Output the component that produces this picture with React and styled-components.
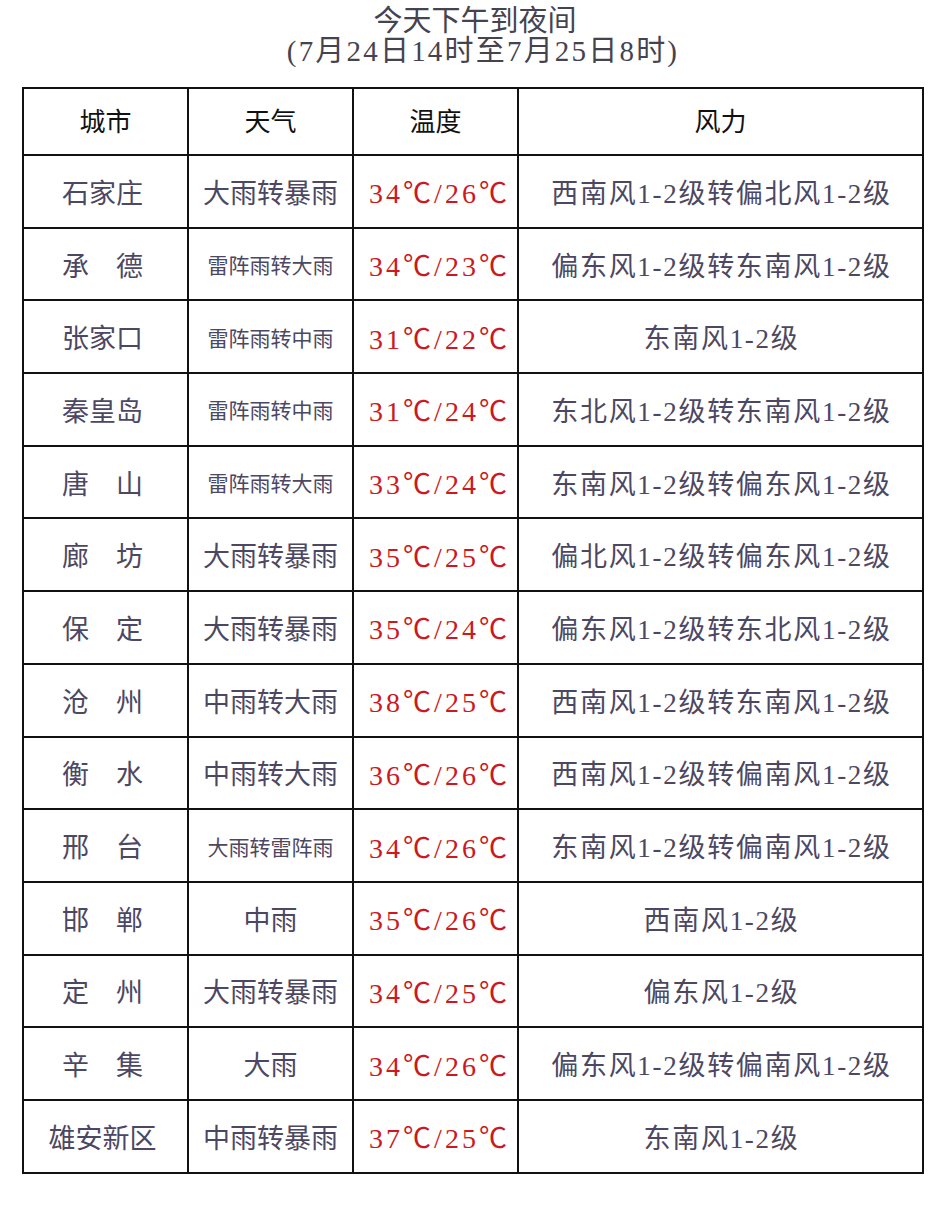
import React from "react";
import styled, { createGlobalStyle } from "styled-components";

const rows = [
  ["石家庄", "大雨转暴雨", false, "34℃/26℃", "西南风1-2级转偏北风1-2级"],
  ["承　德", "雷阵雨转大雨", true, "34℃/23℃", "偏东风1-2级转东南风1-2级"],
  ["张家口", "雷阵雨转中雨", true, "31℃/22℃", "东南风1-2级"],
  ["秦皇岛", "雷阵雨转中雨", true, "31℃/24℃", "东北风1-2级转东南风1-2级"],
  ["唐　山", "雷阵雨转大雨", true, "33℃/24℃", "东南风1-2级转偏东风1-2级"],
  ["廊　坊", "大雨转暴雨", false, "35℃/25℃", "偏北风1-2级转偏东风1-2级"],
  ["保　定", "大雨转暴雨", false, "35℃/24℃", "偏东风1-2级转东北风1-2级"],
  ["沧　州", "中雨转大雨", false, "38℃/25℃", "西南风1-2级转东南风1-2级"],
  ["衡　水", "中雨转大雨", false, "36℃/26℃", "西南风1-2级转偏南风1-2级"],
  ["邢　台", "大雨转雷阵雨", true, "34℃/26℃", "东南风1-2级转偏南风1-2级"],
  ["邯　郸", "中雨", false, "35℃/26℃", "西南风1-2级"],
  ["定　州", "大雨转暴雨", false, "34℃/25℃", "偏东风1-2级"],
  ["辛　集", "大雨", false, "34℃/26℃", "偏东风1-2级转偏南风1-2级"],
  ["雄安新区", "中雨转暴雨", false, "37℃/25℃", "东南风1-2级"],
];

export default function App() {
  return (
    <Page>
      <GlobalStyle />
      <Title>
        <TitleLine>今天下午到夜间</TitleLine>
        <TitleLine $spaced>(7月24日14时至7月25日8时)</TitleLine>
      </Title>
      <Grid>
        <HeadCell>城市</HeadCell>
        <HeadCell>天气</HeadCell>
        <HeadCell>温度</HeadCell>
        <HeadCell>风力</HeadCell>
        {rows.map(([city, weather, small, temp, wind], i) => (
          <React.Fragment key={i}>
            <Cell $shift>{city}</Cell>
            <Cell $small={small}>{weather}</Cell>
            <TempCell>{temp}</TempCell>
            <WindCell>{wind}</WindCell>
          </React.Fragment>
        ))}
      </Grid>
    </Page>
  );
}

const GlobalStyle = createGlobalStyle`
  body {
    margin: 0;
    background: #ffffff;
    font-family: "Liberation Serif", "Noto Sans CJK SC", serif;
  }
`;

const Page = styled.div`
  width: 942px;
  height: 1218px;
  padding: 0 20px 0 22px;
  box-sizing: border-box;
`;

const Title = styled.div`
  height: 87px;
  padding-top: 6px;
  box-sizing: border-box;
  text-align: center;
  color: #45434f;
  padding-left: 6px;
`;

const TitleLine = styled.div`
  font-size: 29px;
  line-height: 30px;
  letter-spacing: ${({ $spaced }) => ($spaced ? "2.2px" : "0")};
  padding-left: ${({ $spaced }) => ($spaced ? "16px" : "0")};
`;

const Grid = styled.div`
  display: grid;
  grid-template-columns: 165px 165px 165px 405px;
  grid-template-rows: 67px repeat(14, 72.7px);
  border-top: 2px solid #111;
  border-left: 2px solid #111;
  width: 902px;
  box-sizing: border-box;
`;

const Cell = styled.div`
  display: flex;
  align-items: center;
  justify-content: center;
  border-right: 2px solid #111;
  border-bottom: 2px solid #111;
  font-size: ${({ $small }) => ($small ? "21px" : "27px")};
  color: #4c4762;
  white-space: nowrap;
  padding-right: ${({ $shift }) => ($shift ? "6px" : "0")};
`;

const HeadCell = styled(Cell)`
  color: #111;
  font-size: 26px;
  padding-bottom: 4px;
`;

const TempCell = styled(Cell)`
  color: #cc1820;
  font-size: 28px;
  letter-spacing: 3px;
  padding-left: 8px;
`;

const WindCell = styled(Cell)`
  letter-spacing: 1.7px;
  padding-left: 2px;
`;
